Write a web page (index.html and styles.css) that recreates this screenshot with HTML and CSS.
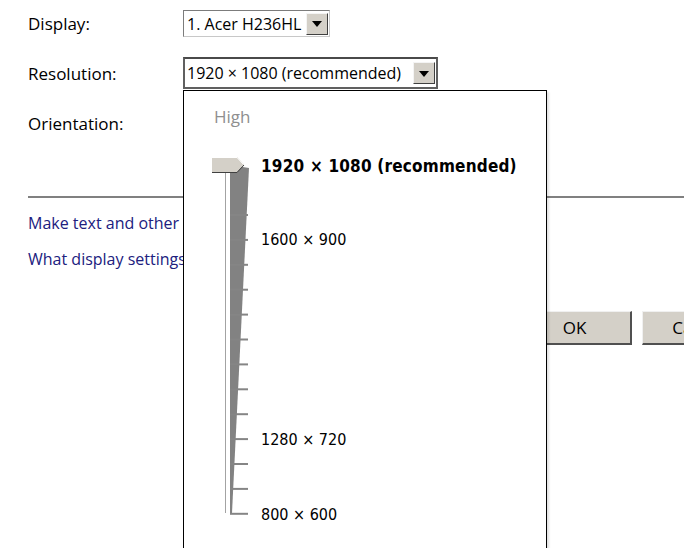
FILE: index.html
```html
<!DOCTYPE html>
<html>
<head>
<meta charset="utf-8">
<link rel="stylesheet" href="styles.css">
</head>
<body>
<div class="page">
  <div class="row row-display">
    <span class="label">Display:</span>
    <div class="combo combo-display">
      <span class="combo-text">1. Acer H236HL</span>
      <span class="combo-btn"><span class="arrow"></span></span>
    </div>
  </div>
  <div class="row row-res">
    <span class="label">Resolution:</span>
    <div class="combo combo-res">
      <span class="combo-text">1920 × 1080 (recommended)</span>
      <span class="combo-btn"><span class="arrow"></span></span>
    </div>
  </div>
  <div class="row row-orient">
    <span class="label">Orientation:</span>
  </div>
  <hr class="sep">
  <a class="link link1">Make text and other items larger or smaller</a>
  <a class="link link2">What display settings should I choose?</a>
  <div class="buttons">
    <button class="btn">OK</button>
    <button class="btn">Cancel</button>
  </div>

  <div class="popup">
    <div class="high">High</div>
    <div class="slider">
      <svg class="slider-svg" width="80" height="380" viewBox="0 0 80 380">
        <polygon points="46,15 65,18 48,363 46,363" fill="#828282"/>
        <line x1="41.5" y1="23" x2="41.5" y2="363" stroke="#a3a3a3" stroke-width="1"/>
        <g stroke="#858585" stroke-width="2">
          <line x1="46" y1="65" x2="64" y2="65"/>
          <line x1="46" y1="89.9" x2="64" y2="89.9"/>
          <line x1="46" y1="114.8" x2="64" y2="114.8"/>
          <line x1="46" y1="139.7" x2="64" y2="139.7"/>
          <line x1="46" y1="164.6" x2="64" y2="164.6"/>
          <line x1="46" y1="189.5" x2="64" y2="189.5"/>
          <line x1="46" y1="214.4" x2="64" y2="214.4"/>
          <line x1="46" y1="239.3" x2="64" y2="239.3"/>
          <line x1="46" y1="264.2" x2="64" y2="264.2"/>
          <line x1="46" y1="289.1" x2="64" y2="289.1"/>
          <line x1="46" y1="314" x2="64" y2="314"/>
          <line x1="46" y1="338.9" x2="64" y2="338.9"/>
          <line x1="46" y1="363.8" x2="64" y2="363.8"/>
        </g>
        <polygon points="28,7 53,7 60,14.5 53,22 28,22" fill="#d4d0c8"/>
        <polyline points="28,7.5 53,7.5 59.5,14.5" fill="none" stroke="#ffffff" stroke-width="1"/>
        <polyline points="28,22.5 53,22.5 60,15" fill="none" stroke="#404040" stroke-width="1"/>
      </svg>
      <span class="res res-1 bold">1920 × 1080 (recommended)</span>
      <span class="res res-2">1600 × 900</span>
      <span class="res res-3">1280 × 720</span>
      <span class="res res-4">800 × 600</span>
    </div>
  </div>
</div>
</body>
</html>
```

FILE: styles.css
```css
html, body {
  margin: 0;
  padding: 0;
  background: #ffffff;
  overflow: hidden;
  width: 684px;
  height: 548px;
}

.page {
  position: relative;
  width: 684px;
  height: 548px;
  padding-left: 28px;
  box-sizing: border-box;
  overflow: hidden;
  font-family: "Open Sans", "Noto Sans", sans-serif;
  font-size: 17px;
  color: #000;
}

.row {
  display: flex;
  align-items: center;
}

.label {
  width: 155px;
  flex: none;
}

.row-display {
  padding-top: 10px;
  height: 27px;
}

.row-res {
  margin-top: 20px;
  height: 32px;
}

.row-orient {
  margin-top: 18px;
  height: 32px;
}

.combo {
  display: flex;
  align-items: center;
  box-sizing: border-box;
  background: #fff;
}

.combo-display {
  width: 147px;
  height: 27px;
  border-top: 1px solid #7c7c7c;
  border-left: 1px solid #7c7c7c;
  border-right: 1px solid #c8c8c8;
  border-bottom: 1px solid #c8c8c8;
  padding-left: 3px;
}

.combo-res {
  width: 255px;
  height: 32px;
  border: 2px solid #606060;
  border-top-color: #4a4a4a;
  padding-left: 2px;
}

.combo-text {
  flex: 1;
  white-space: nowrap;
  line-height: 20px;
  font-size: 16px;
}

.combo-btn {
  width: 22px;
  height: 22px;
  background: #d4d0c8;
  border-right: 1px solid #404040;
  border-bottom: 1px solid #404040;
  border-top: 1px solid #f4f4f4;
  border-left: 1px solid #f4f4f4;
  box-sizing: border-box;
  display: flex;
  align-items: center;
  justify-content: center;
  margin-right: 1px;
}

.arrow {
  width: 0;
  height: 0;
  border-left: 5px solid transparent;
  border-right: 5px solid transparent;
  border-top: 6px solid #000;
  margin-top: 1px;
}

.sep {
  margin: 0;
  margin-top: 57px;
  border: 0;
  height: 2px;
  background: #808080;
  width: 656px;
}

.link {
  display: block;
  color: #20207e;
  line-height: 20px;
  white-space: nowrap;
  font-size: 16px;
}

.link1 {
  margin-top: 15px;
}

.link2 {
  margin-top: 16px;
}

.buttons {
  display: flex;
  gap: 10px;
  margin-top: 42px;
  padding-left: 490px;
}

.btn {
  flex: none;
  width: 114px;
  height: 34px;
  background: #d4d0c8;
  border: 0;
  border-top: 1px solid #f0f0f0;
  border-left: 1px solid #f0f0f0;
  border-right: 2px solid #505050;
  border-bottom: 2px solid #505050;
  font-family: "Open Sans", "Noto Sans", sans-serif;
  font-size: 17px;
  color: #000;
  padding: 0;
}

.popup {
  position: absolute;
  left: 183px;
  top: 90px;
  width: 364px;
  height: 470px;
  box-sizing: border-box;
  border: 1px solid #000;
  background: #fff;
  box-shadow: 2px 2px 2px rgba(0, 0, 0, 0.12);
}

.high {
  padding-top: 16px;
  padding-left: 30px;
  line-height: 20px;
  color: #8f8f8f;
}

.slider {
  position: relative;
  margin-top: 23px;
  height: 380px;
}

.slider-svg {
  position: absolute;
  left: 0;
  top: 0;
}

.res {
  position: absolute;
  left: 77px;
  line-height: 20px;
  white-space: nowrap;
  font-family: "DejaVu Sans Condensed", "DejaVu Sans", sans-serif;
  font-size: 16px;
}

.bold {
  font-weight: bold;
  font-size: 17px;
  letter-spacing: 0.2px;
}

.res-1 { top: 6px; }
.res-2 { top: 80px; }
.res-3 { top: 280px; }
.res-4 { top: 355px; }
```
